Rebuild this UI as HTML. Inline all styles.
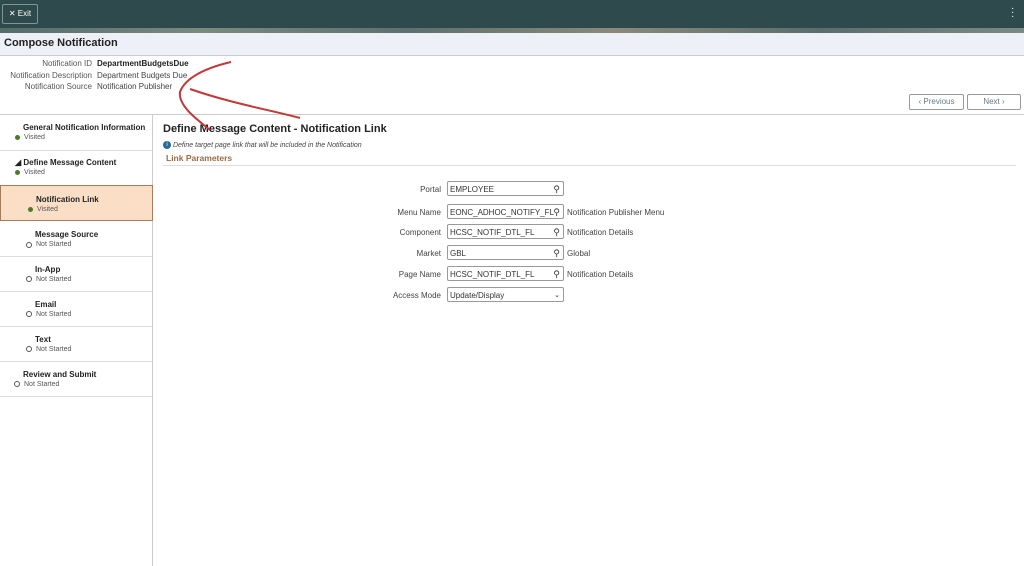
<!DOCTYPE html><html><head><style>
body{margin:0;width:1024px;height:566px;overflow:hidden;background:#fff;font-family:"Liberation Sans",sans-serif;font-size:8px;color:#333;position:relative}
.a{position:absolute}
.nav{position:absolute;left:0;width:152px;border-bottom:1px solid #ddd}
.nav b{position:absolute;font-size:8px;color:#222;line-height:1}
.nav span{position:absolute;font-size:7px;color:#555;line-height:1}
.dot{position:absolute;width:5px;height:5px;border-radius:50%;background:#4a7a2a}
.o{position:absolute;width:4px;height:4px;border-radius:50%;border:1px solid #555}
.lbl{position:absolute;right:583px;font-size:8px;color:#444;text-align:right}
.in{position:absolute;left:447px;height:15px;border:1px solid #999;border-radius:2px;font-size:8px;line-height:15px;padding-left:2px;box-sizing:border-box;width:117px}
.in i{position:absolute;right:3px;top:0;font-style:normal;font-size:9px}
.d{position:absolute;left:567px;font-size:8px;color:#444}
</style></head><body>
<div class="a" style="left:0;top:0;width:1024px;height:28px;background:#2f4a4c"></div>
<div class="a" style="left:0;top:28px;width:1024px;height:5px;background:linear-gradient(90deg,#556c6b,#7a8a80 20%,#5d706d 40%,#8a8a7a 60%,#5a6d6b 80%,#7d8a84)"></div>
<div class="a" style="left:2px;top:4px;width:34px;height:18px;border:1px solid #7f9594;border-radius:2px;color:#fff;font-size:8px;line-height:18px;text-align:center">✕ Exit</div>
<div class="a" style="left:1011px;top:7px;color:#fff;font-size:10px;line-height:4px">·<br>·<br>·</div>
<div class="a" style="left:0;top:33px;width:1024px;height:22px;background:#eef0f8;border-bottom:1px solid #ccc"></div>
<div class="a" style="left:4px;top:37px;font-size:11px;font-weight:bold;color:#222">Compose Notification</div>
<div class="a" style="right:932px;top:58px;text-align:right;color:#555;line-height:11.5px">Notification ID<br>Notification Description<br>Notification Source</div>
<div class="a" style="left:97px;top:58px;color:#444;line-height:11.5px"><b style="color:#222">DepartmentBudgetsDue</b><br>Department Budgets Due<br>Notification Publisher</div>
<div class="a" style="left:909px;top:94px;width:53px;height:14px;border:1px solid #999;border-radius:2px;color:#6a7a8a;text-align:center;line-height:14px">‹ Previous</div>
<div class="a" style="left:967px;top:94px;width:52px;height:14px;border:1px solid #999;border-radius:2px;color:#6a7a8a;text-align:center;line-height:14px">Next ›</div>
<div class="a" style="left:0;top:114px;width:1024px;height:1px;background:#ccc"></div>
<div class="a" style="left:152px;top:115px;width:1px;height:451px;background:#ccc"></div>
<div class="nav" style="top:115px;height:35px"><b style="left:23px;top:9px">General Notification Information</b><div class="dot" style="left:15px;top:20px"></div><span style="left:24px;top:19px">Visited</span></div>
<div class="nav" style="top:151px;height:34px"><b style="left:15px;top:8px">◢ Define Message Content</b><div class="dot" style="left:15px;top:19px"></div><span style="left:24px;top:18px">Visited</span></div>
<div class="nav" style="top:185px;height:34px;background:#fadfc6;border:1px solid #a67b5b;width:151px"><b style="left:35px;top:10px">Notification Link</b><div class="dot" style="left:27px;top:21px"></div><span style="left:36px;top:20px">Visited</span></div>
<div class="nav" style="top:222px;height:34px"><b style="left:35px;top:9px">Message Source</b><div class="o" style="left:26px;top:20px"></div><span style="left:36px;top:19px">Not Started</span></div>
<div class="nav" style="top:257px;height:34px"><b style="left:35px;top:9px">In-App</b><div class="o" style="left:26px;top:19px"></div><span style="left:36px;top:19px">Not Started</span></div>
<div class="nav" style="top:292px;height:34px"><b style="left:35px;top:9px">Email</b><div class="o" style="left:26px;top:19px"></div><span style="left:36px;top:19px">Not Started</span></div>
<div class="nav" style="top:327px;height:34px"><b style="left:35px;top:9px">Text</b><div class="o" style="left:26px;top:19px"></div><span style="left:36px;top:19px">Not Started</span></div>
<div class="nav" style="top:362px;height:34px"><b style="left:23px;top:9px">Review and Submit</b><div class="o" style="left:14px;top:19px"></div><span style="left:24px;top:19px">Not Started</span></div>
<div class="a" style="left:163px;top:123px;font-size:11px;font-weight:bold;color:#222">Define Message Content - Notification Link</div>
<div class="a" style="left:163px;top:141px;font-size:7px;color:#444;font-style:italic"><span style="display:inline-block;width:8px;height:8px;border-radius:50%;background:#2a6a9a;color:#fff;font-size:6px;text-align:center;line-height:8px;font-style:normal;vertical-align:middle">i</span> Define target page link that will be included in the Notification</div>
<div class="a" style="left:166px;top:153px;font-size:8.5px;font-weight:bold;color:#9a6a45">Link Parameters</div>
<div class="a" style="left:163px;top:165px;width:853px;height:1px;background:#ddd"></div>
<div class="lbl" style="top:185px">Portal</div><div class="in" style="top:181px">EMPLOYEE<i>⚲</i></div>
<div class="lbl" style="top:208px">Menu Name</div><div class="in" style="top:204px">EONC_ADHOC_NOTIFY_FL<i>⚲</i></div><div class="d" style="top:208px">Notification Publisher Menu</div>
<div class="lbl" style="top:228px">Component</div><div class="in" style="top:224px">HCSC_NOTIF_DTL_FL<i>⚲</i></div><div class="d" style="top:228px">Notification Details</div>
<div class="lbl" style="top:249px">Market</div><div class="in" style="top:245px">GBL<i>⚲</i></div><div class="d" style="top:249px">Global</div>
<div class="lbl" style="top:270px">Page Name</div><div class="in" style="top:266px">HCSC_NOTIF_DTL_FL<i>⚲</i></div><div class="d" style="top:270px">Notification Details</div>
<div class="lbl" style="top:291px">Access Mode</div><div class="in" style="top:287px">Update/Display<i style="font-size:7px">⌄</i></div>
<svg class="a" style="left:0;top:0" width="1024" height="566"><path d="M231 62 C205 68 185 78 180 92 C178 105 195 118 210 130" stroke="#c0393b" stroke-width="2" fill="none"/><path d="M190 89 C230 103 270 110 300 118" stroke="#c0393b" stroke-width="2" fill="none"/></svg>
</body></html>
